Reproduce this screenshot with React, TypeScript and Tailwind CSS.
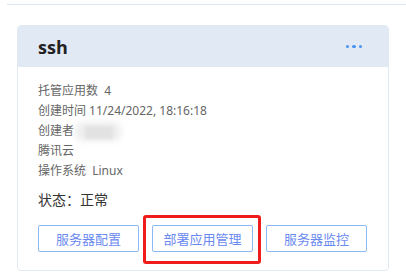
import React from "react";

export default function App() {
  const font = { fontFamily: '"Noto Sans", "Noto Sans CJK SC", sans-serif' };
  return (
    <div className="w-[406px] h-[279px] bg-white relative overflow-hidden" style={font}>
      <div className="ml-[7px] h-[1px] mt-[4px] bg-[#dfe6f2]" />
      <div className="ml-[17px] mt-[20px] w-[372px] h-[246px] border border-[#e3e9f3] rounded-[4px] overflow-hidden flex flex-col">
        <div className="h-[41px] bg-[#e1e9f5] flex items-center justify-between pl-[20px] pr-[26px]">
          <span className="text-[18px] font-bold text-[#222] leading-none" style={{ fontFamily: '"Open Sans", sans-serif' }}>ssh</span>
          <div className="flex gap-[3px] items-center">
            <span className="w-[3.5px] h-[3.5px] rounded-full bg-[#4f95f0]" />
            <span className="w-[3.5px] h-[3.5px] rounded-full bg-[#4f95f0]" />
            <span className="w-[3.5px] h-[3.5px] rounded-full bg-[#4f95f0]" />
          </div>
        </div>
        <div className="pl-[20px] pt-[14px] text-[12px] leading-[20px] text-[#666]">
          <div>托管应用数&nbsp;&nbsp;4</div>
          <div>创建时间 11/24/2022, 18:16:18</div>
          <div className="flex items-center">
            <span>创建者</span>
            <span className="relative ml-[1px] w-[46px] h-[20px]">
              <span className="absolute left-[0px] top-[1px] w-[46px] h-[19px] rounded-[7px] bg-[#eeeeee] blur-[3px]" />
              <span className="absolute left-[10px] top-[5px] w-[28px] h-[13px] bg-[#e2e2e2] blur-[1.5px]" />
            </span>
          </div>
          <div>腾讯云</div>
          <div>操作系统&nbsp;&nbsp;Linux</div>
          <div className="mt-[9px] text-[14px] text-[#333]">状态：正常</div>
          <div className="mt-[15px] flex gap-[13px]">
            <button className="w-[101px] h-[27px] border border-[#8cbaf6] rounded-[2px] text-[13px] text-[#6b8af0] flex items-center justify-center">服务器配置</button>
            <button className="w-[101px] h-[27px] border border-[#8cbaf6] rounded-[2px] text-[13px] text-[#6b8af0] flex items-center justify-center">部署应用管理</button>
            <button className="w-[101px] h-[27px] border border-[#8cbaf6] rounded-[2px] text-[13px] text-[#6b8af0] flex items-center justify-center">服务器监控</button>
          </div>
        </div>
      </div>
      <div className="absolute left-[143px] top-[215px] w-[118px] h-[49px] border-[3px] border-[#f01c1c] rounded-[3px]" />
    </div>
  );
}
